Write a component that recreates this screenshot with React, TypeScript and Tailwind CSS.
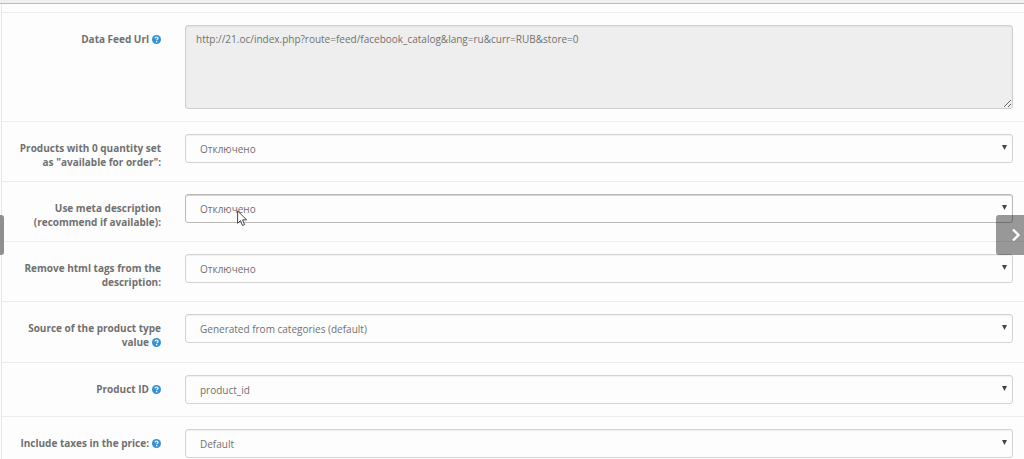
import { useState } from "react";
import { clsx } from "clsx";

interface Field {
  id: string;
  label: string;
  options: string[];
  hint?: boolean;
  active?: boolean;
}

const toggle = ["Отключено", "Включено"];

const fields: Field[] = [
  { id: "zero-quantity", label: 'Products with 0 quantity set as "available for order":', options: toggle },
  { id: "meta-description", label: "Use meta description (recommend if available):", options: toggle, active: true },
  { id: "remove-html", label: "Remove html tags from the description:", options: toggle },
  { id: "product-type", label: "Source of the product type value", options: ["Generated from categories (default)"], hint: true },
  { id: "product-id", label: "Product ID", options: ["product_id"], hint: true },
  { id: "taxes", label: "Include taxes in the price:", options: ["Default"], hint: true },
];

function HintIcon() {
  return (
    <svg viewBox="0 0 18 18" className="ml-[3px] inline-block size-[9px] align-[-1px]" aria-hidden="true">
      <circle cx="9" cy="9" r="9" fill="#3391d2" />
      <path d="M6 6.800C6.200 4.900 7.400 4 9.100 4c1.800 0 3 1 3 2.500 0 2.200-2.700 2.200-2.700 4.200" fill="none" stroke="#fff" strokeWidth="2.400" />
      <rect x="8" y="12" width="2.600" height="2.600" fill="#fff" />
    </svg>
  );
}

function FieldLabel({ id, text, hint }: { id: string; text: string; hint?: boolean }) {
  return (
    <label htmlFor={id} className="w-[159px] shrink-0 pt-[7px] pb-px pl-4 text-right text-[10px] leading-[14px] font-bold text-[#707070]">
      {text}
      {hint && <HintIcon />}
    </label>
  );
}

function SelectRow({ field }: { field: Field }) {
  const [value, setValue] = useState(field.options[0]);

  return (
    <div className={clsx("flex gap-6 border-t border-[#ededed] pt-3 pr-[11px]", field.hint ? "pb-3" : "pb-[11px]")}>
      <FieldLabel id={field.id} text={field.label} hint={field.hint} />
      <div className="relative h-[29px] flex-1">
        <select
          id={field.id}
          value={value}
          onChange={(e) => setValue(e.target.value)}
          className={clsx(
            "h-full w-full appearance-none rounded-[3px] border bg-[#fdfdfd] pt-px pr-6 pl-[14px] text-[10px] text-[#707070] outline-none",
            field.active ? "border-[#b9b9b9] shadow-[inset_0_1px_0_#d5d5d5]" : "border-[#d3d3d3] shadow-[inset_0_1px_1px_#f0f0f0]"
          )}
        >
          {field.options.map((option) => (
            <option key={option}>{option}</option>
          ))}
        </select>
        <svg viewBox="0 0 5 5" className="pointer-events-none absolute top-[11px] right-[6px] size-[5px]" aria-hidden="true">
          <path d="M0 0h5L2.500 5z" fill="#444" />
        </svg>
      </div>
    </div>
  );
}

function Cursor() {
  return (
    <svg viewBox="0 0 11 17" className="pointer-events-none absolute top-[210px] left-[237px] h-[17px] w-[11px]" aria-hidden="true">
      <path d="M.6.9v12.400l2.900-2.700 2 4.900 2.100-.9-2-4.700h4z" fill="#fff" stroke="#444" strokeWidth="1" />
    </svg>
  );
}

export default function App() {
  return (
    <div className="relative min-h-screen overflow-hidden bg-[#fdfdfd] font-['Open_Sans','Noto_Sans',sans-serif] text-[#707070]">
      <div className="h-1 border-b border-[#bcbcbc] bg-[#f0f0f0]" />
      <form className="ml-px border-l border-[#e8e8e8] pt-2">
        <div className="flex gap-6 border-t border-[#ededed] pt-3 pr-[11px] pb-3">
          <FieldLabel id="feed-url" text="Data Feed Url" hint />
          <textarea
            id="feed-url"
            readOnly
            defaultValue="http://21.oc/index.php?route=feed/facebook_catalog&lang=ru&curr=RUB&store=0"
            className="h-[84px] flex-1 resize rounded-[3px] border border-[#cfcfcf] bg-[#eee] px-[10px] py-[6px] text-[10px] leading-[14px] text-[#707070] shadow-[inset_0_1px_1px_#e2e2e2] outline-none"
          />
        </div>
        {fields.map((field) => (
          <SelectRow key={field.id} field={field} />
        ))}
      </form>

      <button type="button" aria-label="Previous" className="absolute top-[215px] left-0 h-10 w-1 rounded-r-[3px] bg-[#8f8f8f]" />
      <button
        type="button"
        aria-label="Next"
        className="absolute top-[215px] right-0 flex h-10 w-7 items-center justify-end rounded-l-[3px] bg-black/40 pr-[3px]"
      >
        <svg viewBox="0 0 10 14" className="h-[14px] w-[10px]" aria-hidden="true">
          <path d="M2 1.500 7.500 7 2 12.500" fill="none" stroke="#fff" strokeWidth="2.300" />
        </svg>
      </button>
      <Cursor />
    </div>
  );
}
